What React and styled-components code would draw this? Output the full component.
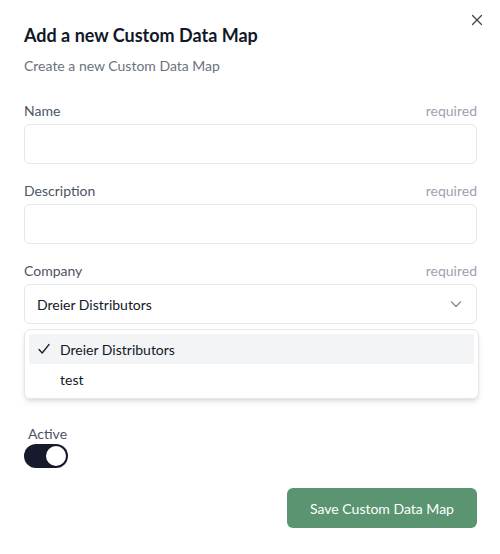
import styled, { createGlobalStyle } from 'styled-components';

const GlobalStyle = createGlobalStyle`
    body {
        margin: 0;
        background: #fff;
        font-family: "Lato", "Liberation Sans", sans-serif;
    }
`;

function Field({ label, children }) {
    return (
        <FieldWrap>
            <LabelRow>
                <Label>{label}</Label>
                <Required>required</Required>
            </LabelRow>
            {children}
        </FieldWrap>
    );
}

export default function App() {
    return (
        <>
            <GlobalStyle />
            <Dialog>
                <CloseBtn aria-label="Close">
                    <svg width="12" height="12" viewBox="0 0 12 12" fill="none" stroke="#444" strokeWidth="1.3" strokeLinecap="round">
                        <path d="M1.5 1.5l9 9M10.5 1.5l-9 9" />
                    </svg>
                </CloseBtn>
                <Title>Add a new Custom Data Map</Title>
                <Subtitle>Create a new Custom Data Map</Subtitle>

                <Form>
                    <Field label="Name">
                        <Input />
                    </Field>
                    <Field label="Description">
                        <Input />
                    </Field>
                    <Field label="Company">
                        <SelectWrap>
                            <Select>
                                <SelectValue>Dreier Distributors</SelectValue>
                                <svg width="14" height="14" viewBox="0 0 14 14" fill="none" stroke="#888" strokeWidth="1.2" strokeLinecap="round" strokeLinejoin="round">
                                    <path d="M2.5 5l4.5 4.5L11.5 5" />
                                </svg>
                            </Select>
                            <Menu>
                                <Option $selected>
                                    <Check>
                                        <svg width="12" height="12" viewBox="0 0 12 12" fill="none" stroke="#222" strokeWidth="1.3" strokeLinecap="round" strokeLinejoin="round">
                                            <path d="M1 6.5l3.2 3.5L11 1.5" />
                                        </svg>
                                    </Check>
                                    Dreier Distributors
                                </Option>
                                <Option>
                                    <Check />
                                    test
                                </Option>
                            </Menu>
                        </SelectWrap>
                    </Field>
                </Form>

                <ActiveField>
                    <ActiveLabel>Active</ActiveLabel>
                    <Toggle role="switch" aria-checked="true" $on>
                        <Knob />
                    </Toggle>
                </ActiveField>

                <Footer>
                    <SaveBtn>Save Custom Data Map</SaveBtn>
                </Footer>
            </Dialog>
        </>
    );
}

const Dialog = styled.div`
    position: relative;
    width: 500px;
    height: 554px;
    box-sizing: border-box;
    padding: 21px 23px 0 24px;
    display: flex;
    flex-direction: column;
`;

const CloseBtn = styled.button`
    position: absolute;
    top: 14px;
    right: 17px;
    width: 12px;
    height: 12px;
    padding: 0;
    border: none;
    background: transparent;
    display: flex;
    cursor: pointer;
`;

const Title = styled.h2`
    margin: 0;
    font-size: 18px;
    line-height: 28px;
    font-weight: 700;
    color: #111827;
`;

const Subtitle = styled.p`
    margin: 7px 0 0;
    font-size: 14px;
    line-height: 20px;
    color: #6b7280;
`;

const Form = styled.div`
    margin-top: 24px;
    display: flex;
    flex-direction: column;
    gap: 16px;
`;

const FieldWrap = styled.div`
    display: flex;
    flex-direction: column;
    gap: 4px;
`;

const LabelRow = styled.div`
    display: flex;
    justify-content: space-between;
    align-items: center;
    height: 20px;
`;

const Label = styled.label`
    font-size: 14px;
    color: #4b5563;
`;

const Required = styled.span`
    font-size: 14px;
    color: #9ca3af;
`;

const Input = styled.input`
    height: 40px;
    box-sizing: border-box;
    border: 1px solid #e5e7eb;
    border-radius: 6px;
    padding: 0 12px;
    font: inherit;
    outline: none;
`;

const SelectWrap = styled.div`
    position: relative;
`;

const Select = styled.div`
    height: 40px;
    box-sizing: border-box;
    border: 1px solid #e5e7eb;
    border-radius: 6px;
    padding: 0 13px 0 12px;
    display: flex;
    align-items: center;
    justify-content: space-between;
`;

const SelectValue = styled.span`
    font-size: 14px;
    color: #111827;
`;

const Menu = styled.div`
    position: absolute;
    top: 45px;
    left: 0;
    right: -2px;
    background: #fff;
    border: 1px solid #e5e7eb;
    border-radius: 6px;
    padding: 4px;
    box-shadow: 0 4px 6px -1px rgba(0, 0, 0, 0.1), 0 2px 4px -2px rgba(0, 0, 0, 0.1);
    z-index: 2;
`;

const Option = styled.div`
    height: 30px;
    display: flex;
    align-items: center;
    border-radius: 2px;
    font-size: 14px;
    color: #111827;
    background: ${({ $selected }) => ($selected ? '#f3f4f6' : 'transparent')};
`;

const Check = styled.span`
    width: 31px;
    padding-left: 9px;
    box-sizing: border-box;
    display: flex;
    align-items: center;
`;

const ActiveField = styled.div`
    margin-top: 100px;
    display: flex;
    flex-direction: column;
    align-items: flex-start;
`;

const ActiveLabel = styled.span`
    margin-left: 4px;
    font-size: 14px;
    line-height: 20px;
    color: #4b5563;
`;

const Toggle = styled.div`
    width: 44px;
    height: 24px;
    box-sizing: border-box;
    border-radius: 12px;
    padding: 2px;
    background: ${({ $on }) => ($on ? '#161a2c' : '#e5e7eb')};
    display: flex;
    justify-content: ${({ $on }) => ($on ? 'flex-end' : 'flex-start')};
`;

const Knob = styled.span`
    width: 20px;
    height: 20px;
    border-radius: 50%;
    background: #fff;
    box-shadow: 0 1px 2px rgba(0, 0, 0, 0.2);
`;

const Footer = styled.div`
    margin-top: 20px;
    display: flex;
    justify-content: flex-end;
`;

const SaveBtn = styled.button`
    height: 40px;
    width: 190px;
    border: none;
    border-radius: 6px;
    background: #5a9470;
    color: #fff;
    font-family: inherit;
    font-size: 14px;
    cursor: pointer;
`;
